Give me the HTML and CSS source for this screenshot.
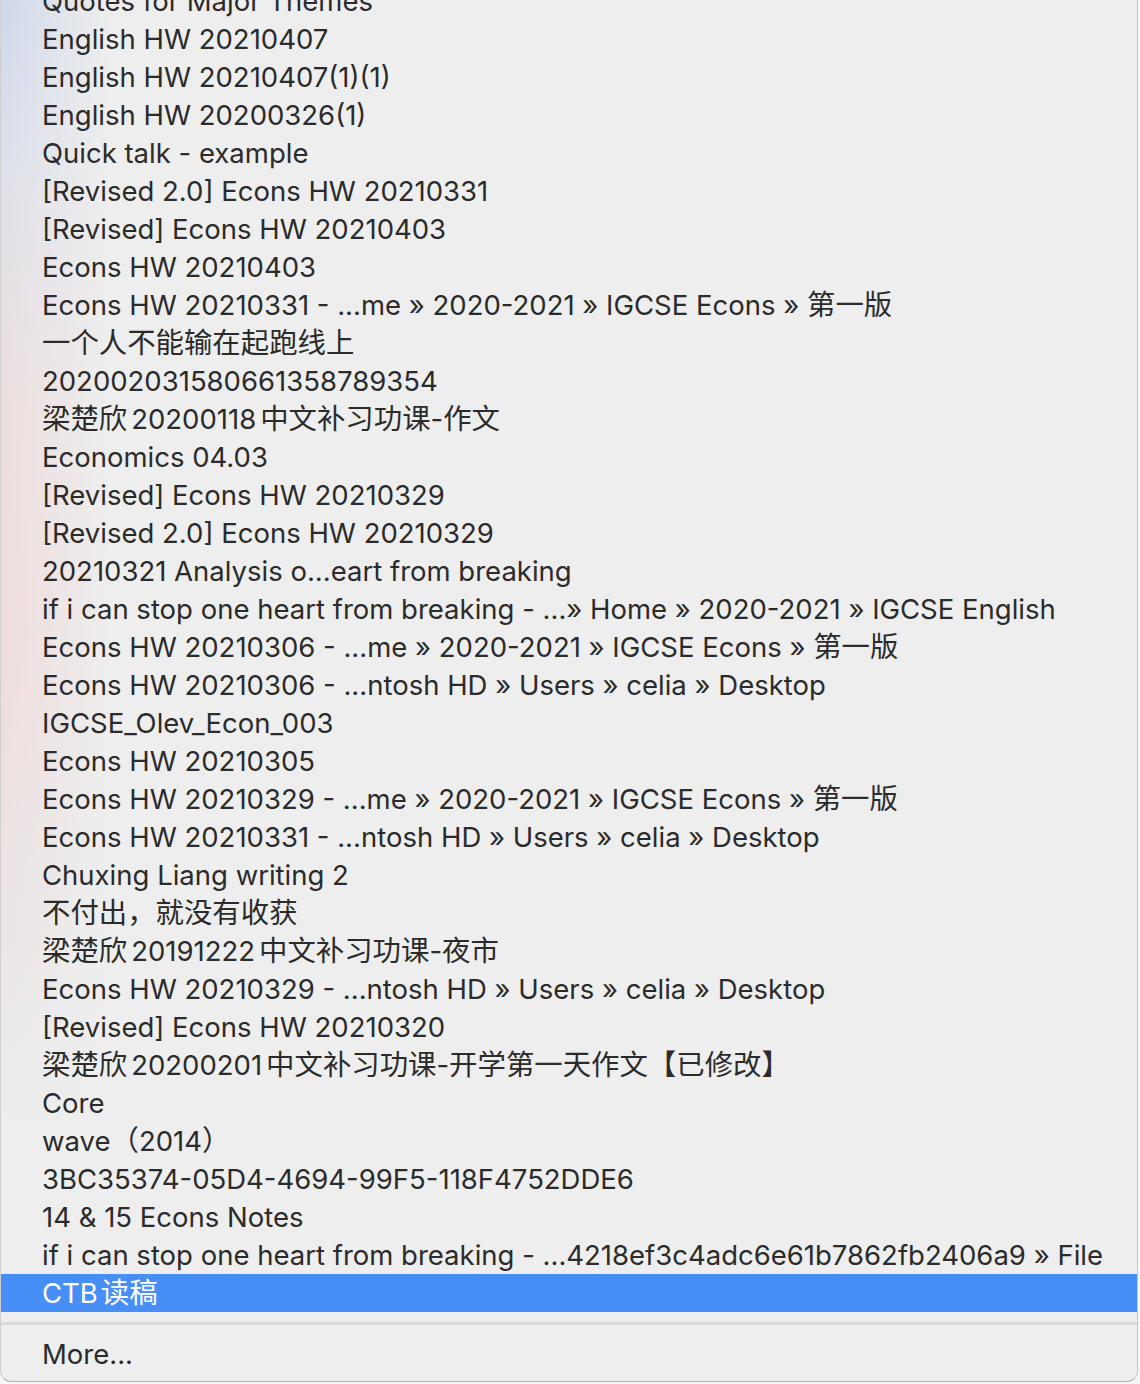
FILE: index.html
```html
<!DOCTYPE html>
<html lang="zh">
<head>
<meta charset="utf-8">
<title>Open Recent</title>
<link rel="stylesheet" href="styles.css">
</head>
<body>
<div class="menu">
  <ul class="items">
    <li class="item">Quotes for Major Themes</li>
    <li class="item">English HW 20210407</li>
    <li class="item">English HW 20210407(1)(1)</li>
    <li class="item">English HW 20200326(1)</li>
    <li class="item">Quick talk - example</li>
    <li class="item">[Revised 2.0] Econs HW 20210331</li>
    <li class="item">[Revised] Econs HW 20210403</li>
    <li class="item">Econs HW 20210403</li>
    <li class="item">Econs HW 20210331 - ...me » 2020-2021 » IGCSE Econs » <span class="cjk">第一版</span></li>
    <li class="item"><span class="cjk">一个人不能输在起跑线上</span></li>
    <li class="item">202002031580661358789354</li>
    <li class="item"><span class="cjk">梁楚欣</span><span class="gap">20200118</span><span class="cjk">中文补习功课</span>-<span class="cjk">作文</span></li>
    <li class="item">Economics 04.03</li>
    <li class="item">[Revised] Econs HW 20210329</li>
    <li class="item">[Revised 2.0] Econs HW 20210329</li>
    <li class="item">20210321 Analysis o...eart from breaking</li>
    <li class="item">if i can stop one heart from breaking - ...» Home » 2020-2021 » IGCSE English</li>
    <li class="item">Econs HW 20210306 - ...me » 2020-2021 » IGCSE Econs » <span class="cjk">第一版</span></li>
    <li class="item">Econs HW 20210306 - ...ntosh HD » Users » celia » Desktop</li>
    <li class="item">IGCSE_Olev_Econ_003</li>
    <li class="item">Econs HW 20210305</li>
    <li class="item">Econs HW 20210329 - ...me » 2020-2021 » IGCSE Econs » <span class="cjk">第一版</span></li>
    <li class="item">Econs HW 20210331 - ...ntosh HD » Users » celia » Desktop</li>
    <li class="item">Chuxing Liang writing 2</li>
    <li class="item"><span class="cjk">不付出，就没有收获</span></li>
    <li class="item"><span class="cjk">梁楚欣</span><span class="gap">20191222</span><span class="cjk">中文补习功课</span>-<span class="cjk">夜市</span></li>
    <li class="item">Econs HW 20210329 - ...ntosh HD » Users » celia » Desktop</li>
    <li class="item">[Revised] Econs HW 20210320</li>
    <li class="item"><span class="cjk">梁楚欣</span><span class="gap">20200201</span><span class="cjk">中文补习功课</span>-<span class="cjk">开学第一天作文【已修改】</span></li>
    <li class="item">Core</li>
    <li class="item">wave<span class="cjk">（</span>2014<span class="cjk">）</span></li>
    <li class="item">3BC35374-05D4-4694-99F5-118F4752DDE6</li>
    <li class="item">14 &amp; 15 Econs Notes</li>
    <li class="item">if i can stop one heart from breaking - ...4218ef3c4adc6e61b7862fb2406a9 » File</li>
    <li class="item selected">CTB<span class="cjk lead">读稿</span></li>
  </ul>
  <div class="separator"></div>
  <ul class="items">
    <li class="item">More...</li>
  </ul>
</div>
</body>
</html>
```
FILE: styles.css
```css
html, body {
  margin: 0;
  padding: 0;
}
body {
  background: #f6f6f6;
  width: 1140px;
  height: 1384px;
  overflow: hidden;
}
.menu {
  margin-top: -18px;
  width: 1138px;
  box-sizing: border-box;
  padding-bottom: 8px;
  border-bottom: 1px solid #b4b4b4;
  border-right: 1px solid #c8c8c8;
  border-left: 1px solid #d0d0d0;
  border-radius: 0 0 11px 11px;
  background:
    linear-gradient(to right, rgba(238,238,238,0) 0, #eeeeee 110px),
    linear-gradient(to bottom, #cdd7ea 0, #dde0ea 180px, #ecdede 420px, #efdcdc 650px, #ebe5e5 950px, #eeeeee 1150px);
  font-family: Inter, "Noto Sans CJK SC", sans-serif;
  font-size: 27.5px;
  color: #2b2b2b;
}
.items {
  list-style: none;
  margin: 0;
  padding: 0;
}
.item {
  height: 38px;
  line-height: 38px;
  padding-left: 41px;
  white-space: nowrap;
}
.cjk {
  font-family: "Noto Sans CJK SC", sans-serif;
  font-size: 28.4px;
  line-height: 20px;
}
.gap {
  margin: 0 4px;
}
.lead {
  margin-left: 3px;
}
.selected {
  background: #478ef7;
  color: #ffffff;
}
.separator {
  height: 3px;
  margin: 10px 0;
  background: #dadada;
}
```
